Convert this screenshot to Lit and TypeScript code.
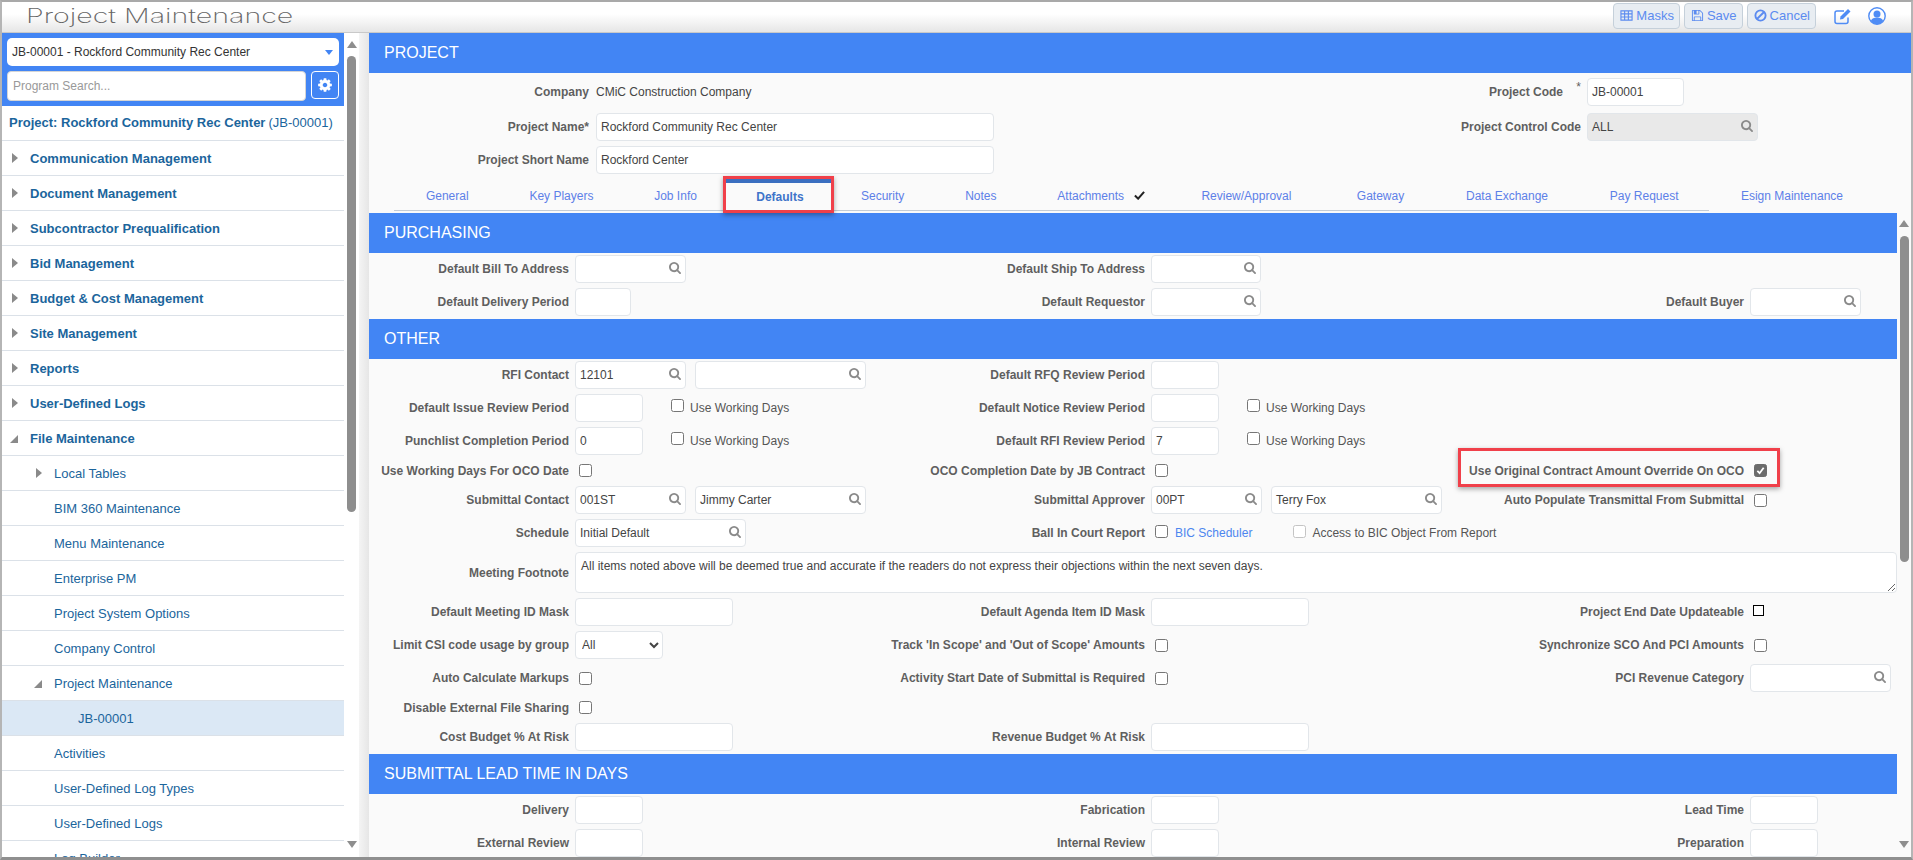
import { LitElement, html, css, nothing } from "lit";
import { customElement } from "lit/decorators.js";

const SEARCH = "M1152 704q0-185-131.500-316.500t-316.500-131.500-316.500 131.500-131.500 316.500 131.500 316.500 316.500 131.500 316.500-131.500 131.500-316.500zm512 832q0 52-38 90t-90 38q-54 0-90-38l-343-342q-179 124-399 124-143 0-273.500-55.500t-225-150-150-225-55.500-273.500 55.500-273.500 150-225 225-150 273.500-55.500 273.500 55.500 225 150 150 225 55.500 273.500q0 220-124 399l343 343q37 37 37 90z";
const COG = "M1152 896q0-106-75-181t-181-75-181 75-75 181 75 181 181 75 181-75 75-181zm512-109v222q0 12-8 23t-20 13l-185 28q-19 54-39 91 35 50 107 138 10 12 10 25t-9 23q-27 37-99 108t-94 71q-12 0-26-9l-138-108q-44 23-91 38-16 136-29 186-7 28-36 28h-222q-14 0-24.500-8.500t-11.500-21.500l-28-184q-49-16-90-37l-141 107q-10 9-25 9-14 0-25-11-126-114-165-168-7-10-7-23 0-12 8-23 15-21 51-66.500t54-70.500q-27-50-41-99l-183-27q-13-2-21-12.500t-8-23.500v-222q0-12 8-23t19-13l186-28q14-46 39-92-40-57-107-138-10-12-10-24 0-10 9-23 26-36 98.500-107.500t94.500-71.500q13 0 26 10l138 107q44-23 91-38 16-136 29-186 7-28 36-28h222q14 0 24.500 8.500t11.500 21.500l28 184q49 16 90 37l142-107q9-9 24-9 13 0 25 10 129 119 165 170 7 8 7 22 0 12-8 23-15 21-51 66.500t-54 70.500q26 50 41 98l183 28q13 2 21 12.500t8 23.500z";
const SAVE = "M512 1536h768v-384h-768v384zm896 0h128v-896q0-14-10-38.500t-20-34.500l-281-281q-10-10-34-20t-39-10v416q0 40-28 68t-68 28h-576q-40 0-68-28t-28-68v-416h-128v1280h128v-416q0-40 28-68t68-28h832q40 0 68 28t28 68v416zm-384-928v-320q0-13-9.500-22.500t-22.500-9.500h-192q-13 0-22.500 9.500t-9.500 22.500v320q0 13 9.500 22.500t22.500 9.500h192q13 0 22.500-9.500t9.500-22.500zm640 32v928q0 40-28 68t-68 28h-1344q-40 0-68-28t-28-68v-1344q0-40 28-68t68-28h928q40 0 88 20t76 48l280 280q28 28 48 76t20 88z";

const searchIcon = html`<svg class="si" viewBox="0 0 1664 1664"><path d=${SEARCH} fill="currentColor"></path></svg>`;

type Ctl =
  | { k: "in"; w: number; v?: string; s?: boolean; gap?: boolean }
  | { k: "cb"; checked?: boolean; black?: boolean }
  | { k: "wd" }
  | { k: "sel" }
  | { k: "ta" }
  | { k: "bic" };
type Row = { h?: number; cells: (null | [string, ...Ctl[]])[] };

const I = (w: number, v = "", s = false): Ctl => ({ k: "in", w, v, s });
const CB: Ctl = { k: "cb" };
const WD: Ctl = { k: "wd" };

const PURCHASING: Row[] = [
  { cells: [["Default Bill To Address", I(111, "", true)], ["Default Ship To Address", I(110, "", true)], null] },
  { cells: [["Default Delivery Period", I(56)], ["Default Requestor", I(110, "", true)], ["Default Buyer", I(111, "", true)]] },
];
const OTHER: Row[] = [
  { cells: [["RFI Contact", I(111, "12101", true), I(171, "", true)], ["Default RFQ Review Period", I(68)], null] },
  { cells: [["Default Issue Review Period", I(68), WD], ["Default Notice Review Period", I(68), WD], null] },
  { cells: [["Punchlist Completion Period", I(68, "0"), WD], ["Default RFI Review Period", I(68, "7"), WD], null] },
  { h: 21, cells: [["Use Working Days For OCO Date", CB], ["OCO Completion Date by JB Contract", CB], ["Use Original Contract Amount Override On OCO", { k: "cb", checked: true }]] },
  { cells: [["Submittal Contact", I(111, "001ST", true), I(171, "Jimmy Carter", true)], ["Submittal Approver", I(111, "00PT", true), I(171, "Terry Fox", true)], ["Auto Populate Transmittal From Submittal", CB]] },
  { cells: [["Schedule", I(171, "Initial Default", true)], ["Ball In Court Report", { k: "bic" }], null] },
];
const OTHER2: Row[] = [
  { cells: [["Default Meeting ID Mask", I(158)], ["Default Agenda Item ID Mask", I(158)], ["Project End Date Updateable", { k: "cb", black: true }]] },
  { cells: [["Limit CSI code usage by group", { k: "sel" }], ["Track 'In Scope' and 'Out of Scope' Amounts", CB], ["Synchronize SCO And PCI Amounts", CB]] },
  { cells: [["Auto Calculate Markups", CB], ["Activity Start Date of Submittal is Required", CB], ["PCI Revenue Category", I(141, "", true)]] },
  { h: 21, cells: [["Disable External File Sharing", CB], null, null] },
  { cells: [["Cost Budget % At Risk", I(158)], ["Revenue Budget % At Risk", I(158)], null] },
];
const LEAD: Row[] = [
  { cells: [["Delivery", I(68)], ["Fabrication", I(68)], ["Lead Time", I(68)]] },
  { cells: [["External Review", I(68)], ["Internal Review", I(68)], ["Preparation", I(68)]] },
];

const NAV: { t: string; lvl: number; arrow?: "r" | "d"; sel?: boolean }[] = [
  { t: "Communication Management", lvl: 0, arrow: "r" },
  { t: "Document Management", lvl: 0, arrow: "r" },
  { t: "Subcontractor Prequalification", lvl: 0, arrow: "r" },
  { t: "Bid Management", lvl: 0, arrow: "r" },
  { t: "Budget & Cost Management", lvl: 0, arrow: "r" },
  { t: "Site Management", lvl: 0, arrow: "r" },
  { t: "Reports", lvl: 0, arrow: "r" },
  { t: "User-Defined Logs", lvl: 0, arrow: "r" },
  { t: "File Maintenance", lvl: 0, arrow: "d" },
  { t: "Local Tables", lvl: 1, arrow: "r" },
  { t: "BIM 360 Maintenance", lvl: 1 },
  { t: "Menu Maintenance", lvl: 1 },
  { t: "Enterprise PM", lvl: 1 },
  { t: "Project System Options", lvl: 1 },
  { t: "Company Control", lvl: 1 },
  { t: "Project Maintenance", lvl: 1, arrow: "d" },
  { t: "JB-00001", lvl: 2, sel: true },
  { t: "Activities", lvl: 1 },
  { t: "User-Defined Log Types", lvl: 1 },
  { t: "User-Defined Logs", lvl: 1 },
  { t: "Log Builder", lvl: 1 },
];

const TABS = ["General", "Key Players", "Job Info", "Defaults", "Security", "Notes", "Attachments", "Review/Approval", "Gateway", "Data Exchange", "Pay Request"];
const TAB_CLASS: Record<string, string> = {
  "Attachments": "att",
  "Review/Approval": "rev",
  "Gateway": "wide",
  "Data Exchange": "wide",
};

@customElement("app-root")
export class AppRoot extends LitElement {
  static styles = css`
    :host { display: block; width: 1913px; height: 860px; overflow: hidden; background: #fff;
      font-family: "Liberation Sans", Arial, sans-serif; font-size: 12px; color: #444; }
    * { box-sizing: border-box; }
    .frame { width: 1913px; height: 860px; display: flex; flex-direction: column;
      border-top: 2px solid #a9a9a9; border-left: 2px solid #b5b5b5; border-right: 2px solid #b5b5b5; border-bottom: 3px solid #8f8f8f; overflow: hidden; }

    .top { height: 31px; flex: none; display: flex; align-items: center; background: linear-gradient(#ffffff 40%, #e6e6e6);
      border-bottom: 1px solid #c9c9c9; }
    .title { margin-left: 24px; font-family: Inter, "Liberation Sans", sans-serif; font-weight: 200; font-size: 20px; color: #666;
      transform: scaleX(1.43); transform-origin: left center; white-space: nowrap; flex: 1; margin-top: -3px; }
    .btn { height: 26px; margin-top: -3px; display: flex; align-items: center; gap: 3px; padding: 0 5px 0 6px; margin-right: 4px; font-size: 13px; color: #5b8bf0;
      background: #e8edf2; border: 1px solid #c5d0da; border-radius: 4px; white-space: nowrap; }
    .btn svg { width: 13px; height: 13px; flex: none; }
    .ticon { width: 18px; height: 18px; margin-top: -3px; flex: none; color: #4f8cf5; }
    .ticon.e { margin-left: 14px; }
    .ticon.u { margin-left: 16px; margin-right: 25px; }

    .body { flex: 1; display: flex; min-height: 0; }
    .side { width: 342px; flex: none; display: flex; flex-direction: column; overflow: hidden; background: #fff; }
    .sidehead { height: 73px; flex: none; background: #4285f4; padding: 5px 5px 0 5px; display: flex; flex-direction: column; gap: 5px; }
    .picker { height: 28px; background: #fff; border-radius: 5px; display: flex; align-items: center; padding: 0 6px 0 5px; color: #333; justify-content: space-between; white-space: nowrap; }
    .caret { width: 0; height: 0; border-left: 4px solid transparent; border-right: 4px solid transparent; border-top: 5px solid #4285f4; }
    .searchrow { display: flex; gap: 5px; }
    .psearch { width: 299px; height: 30px; background: #fff; border: 1px solid #d5d5d5; border-radius: 4px; display: flex; align-items: center; padding-left: 5px; color: #999; }
    .gear { width: 28px; height: 28px; border: 1px solid #fff; border-radius: 4px; display: flex; align-items: center; justify-content: center; color: #fff; }
    .gear svg { width: 16px; height: 16px; }
    .ptitle { height: 35px; flex: none; padding: 0 0 2px 7px; display: flex; align-items: center; gap: 3px; border-bottom: 1px solid #dbe1e8; font-size: 13px; font-weight: bold; color: #1b659c; white-space: nowrap; }
    .ptitle span { font-weight: normal; }
    .nrow { height: 35px; flex: none; display: flex; align-items: center; border-bottom: 1px solid #dbe1e8; color: #1b659c; font-size: 13px; white-space: nowrap; position: relative; }
    .nrow.l0 { font-weight: bold; padding-left: 28px; }
    .nrow.l1 { padding-left: 52px; }
    .nrow.l2 { padding-left: 76px; }
    .nrow.sel { background: #dbe8f5; }
    .tri { position: absolute; width: 0; height: 0; }
    .tri.r { border-top: 5px solid transparent; border-bottom: 5px solid transparent; border-left: 6px solid #8a8a8a; top: 12px; }
    .tri.d { border-bottom: 8px solid #8a8a8a; border-left: 8px solid transparent; top: 14px; }
    .l0 .tri.r { left: 10px; } .l0 .tri.d { left: 8px; }
    .l1 .tri.r { left: 34px; } .l1 .tri.d { left: 32px; }

    .sbar { flex: none; width: 14px; position: relative; }
    .sbar .thumb { position: absolute; left: 3px; width: 9px; background: #8e8e8e; border-radius: 5px; }
    .sbar .up, .sbar .dn { position: absolute; left: 2px; width: 0; height: 0; border-left: 5px solid transparent; border-right: 5px solid transparent; }
    .sbar .up { border-bottom: 7px solid #8e8e8e; }
    .sbar .dn { border-top: 7px solid #8e8e8e; }
    .sideb { width: 15px; background: #fff; margin-right: 0; }
    .sideb .thumb { top: 23px; height: 456px; left: 3px; }
    .sideb .up { top: 8px; left: 3px; }
    .sideb .dn { top: 808px; left: 3px; }
    .sep { width: 10px; flex: none; background: linear-gradient(90deg, #f4f4f4, #e6e6e6); }

    .main { flex: 1; min-width: 0; background: #fafafa; display: flex; flex-direction: column; overflow: hidden; }
    .bar { height: 40px; flex: none; background: #4285f4; color: #fff; font-size: 16px; display: flex; align-items: center; padding-left: 15px; white-space: nowrap; }

    .proj { flex: none; height: 101px; display: grid; grid-template-columns: 227px 398px 593px 1fr; grid-template-rows: 28px 30px 28px; row-gap: 5px; padding: 5px 0 0; }
    .mid { margin-top: 2px; }
    .plabel { text-align: right; font-weight: bold; color: #5f5f5f; align-self: center; padding-right: 7px; white-space: nowrap; }
    .plabel.r2 { padding-right: 6px; position: relative; }
    .plabel.code { padding-right: 24px; position: relative; }
    .star { position: absolute; right: 6px; top: -5px; font-weight: normal; }
    .val { display: flex; align-items: center; padding-left: 0; white-space: nowrap; color: #444; }

    .tabstrip { display: flex; height: 39px; position: relative; padding-left: 25px; }
    .tabline { display: flex; border-bottom: 1px solid #c4ccd6; height: 32px; margin-top: 5px; padding-left: 1.5px; }
    .tab { padding: 10px 30.4px 0; color: #5d80e8; white-space: nowrap; height: 32px; position: relative; }
    .tab.active { font-weight: bold; color: #3f74c9; border-top: 4px solid #3b6fc0; padding: 7px 27px 0 30px; margin-left: -1px; background: #fafafa; height: 33px; }
    .tab.att { padding-right: 26px; }
    .tab.rev { padding-right: 35px; }
    .tab.wide { padding-right: 31.4px; }
    .tab .ck { display: inline-block; width: 11px; height: 10px; margin-left: 10px; color: #222; }
    .tab.last { margin-top: 5px; padding-left: 32px; }
    .redtab { position: absolute; left: -3px; right: -3px; top: -7px; bottom: -1px; border: 3px solid #f0404a; box-shadow: 0 2px 5px rgba(0,0,0,.35); pointer-events: none; }

    .wrap { flex: 1; min-height: 0; display: flex; }
    .content { width: 1528px; flex: none; overflow: hidden; }
    .form { display: grid; grid-template-columns: 206px 295px 281px 309px 290px 147px; row-gap: 5px; padding: 2px 0 3px; }
    .lab { text-align: right; font-weight: bold; color: #5f5f5f; padding-right: 6px; white-space: nowrap; display: flex; align-items: center; justify-content: flex-end; }
    .ctl { display: flex; align-items: center; gap: 9px; min-width: 0; white-space: nowrap; }
    .inp { height: 28px; flex: none; background: #fff; border: 1px solid #e2e6ea; border-radius: 4px; display: flex; align-items: center; justify-content: space-between; padding: 0 4px; color: #444; white-space: nowrap; }
    .inp.grey { background: #e9e9e9; }
    .si { width: 12px; height: 12px; color: #8a8a8a; flex: none; margin-top: -2px; }
    .cb { width: 13px; height: 13px; flex: none; margin-left: 4px; border: 1px solid #767676; border-radius: 2.5px; background: #fff; display: flex; align-items: center; justify-content: center; }
    .cb.on { background: #6b6b6b; border-color: #6b6b6b; color: #fff; }
    .cb.on svg { width: 9px; height: 9px; }
    .cb.blk { border-color: #000; border-radius: 0; width: 11px; height: 11px; margin-left: 3px; margin-top: -3px; }
    .cb.off { border-color: #c4c4c4; }
    .wd { display: flex; align-items: center; margin-left: 19px; }
    .wd .cb { margin-left: 0; margin-top: -5px; }
    .wd span { margin-left: 6px; color: #555; }
    .bic { display: flex; align-items: center; }
    .bic a { color: #4d86ef; margin-left: 7px; }
    .bic .cb.off { margin-left: 41px; margin-top: -3px; }
    .bic > .cb:first-child { margin-top: -3px; }
    .bic span { margin-left: 6px; color: #555; }
    select { width: 88px; height: 28px; font: 12px "Liberation Sans", Arial, sans-serif; color: #444; background: #fff; border: 1px solid #e2e6ea; border-radius: 4px; padding-left: 2px; }
    .noterow { grid-column: 2 / -1; }
    textarea { display: block; width: 1322px; height: 41px; font: 12px "Liberation Sans", Arial, sans-serif; color: #444; background: #fff; border: 1px solid #e2e6ea; border-radius: 4px; padding: 6px 5px; outline: none; }
    .hl { position: relative; }
    .redbox { position: absolute; left: -2px; right: -30px; top: -12px; bottom: -6px; border: 3px solid #f0404a; box-shadow: 0 2px 5px rgba(0,0,0,.35); pointer-events: none; }
    .rsb { flex: none; width: 14px; background: #fafafa; position: relative; }
    .rsb .thumb { top: 23px; height: 326px; left: 3px; }
    .rsb .up { top: 7px; left: 2px; }
    .rsb .dn { top: 628px; left: 2px; }
  `;

  ctl(c: Ctl) {
    switch (c.k) {
      case "in":
        return html`<div class="inp" style="width:${c.w}px"><span>${c.v}</span>${c.s ? searchIcon : nothing}</div>`;
      case "cb":
        return html`<div class="cb ${c.checked ? "on" : ""} ${c.black ? "blk" : ""}">${c.checked
          ? html`<svg viewBox="0 0 10 10"><path d="M1.5 5.5 L4 8 L8.5 2" fill="none" stroke="currentColor" stroke-width="2"></path></svg>`
          : nothing}</div>`;
      case "wd":
        return html`<div class="wd"><div class="cb"></div><span>Use Working Days</span></div>`;
      case "sel":
        return html`<select><option>All</option></select>`;
      case "ta":
        return html`<textarea readonly .value=${"All items noted above will be deemed true and accurate if the readers do not express their objections within the next seven days."}></textarea>`;
      case "bic":
        return html`<div class="bic"><div class="cb"></div><a>BIC Scheduler</a><div class="cb off"></div><span>Access to BIC Object From Report</span></div>`;
    }
  }

  rows(rows: Row[]) {
    return rows.map((r) =>
      r.cells.map((c) => {
        const h = r.h ? `height:${r.h}px` : "";
        if (!c) return html`<div style=${h}></div><div style=${h}></div>`;
        const [label, ...ctls] = c;
        const hi = label.startsWith("Use Original");
        return html`<div class="lab ${hi ? "hl" : ""}" style=${h}>${label}${hi ? html`<div class="redbox"></div>` : nothing}</div><div class="ctl" style=${h}>${ctls.map((x) => this.ctl(x))}</div>`;
      })
    );
  }

  render() {
    return html`<div class="frame">
      <div class="top">
        <div class="title">Project Maintenance</div>
        <div class="btn"><svg viewBox="0 0 14 14"><path d="M1 2h12v10H1zM1 5.300h12M1 8.600h12M5 2v10M9 2v10" fill="none" stroke="currentColor" stroke-width="1.200"></path></svg>Masks</div>
        <div class="btn"><svg viewBox="0 0 1792 1792"><path d=${SAVE} fill="currentColor"></path></svg>Save</div>
        <div class="btn"><svg viewBox="0 0 14 14"><circle cx="7" cy="7" r="5.500" fill="none" stroke="currentColor" stroke-width="2"></circle><path d="M3.200 10.800L10.800 3.200" stroke="currentColor" stroke-width="2"></path></svg>Cancel</div>
        <svg class="ticon e" viewBox="0 0 18 18"><path d="M14 10.500V14.500a2 2 0 0 1-2 2H3a2 2 0 0 1-2-2V6a2 2 0 0 1 2-2h7" fill="none" stroke="currentColor" stroke-width="1.500"></path><path d="M6.500 9.500 14 2l2.500 2.500L9 12l-3 .6z" fill="currentColor"></path></svg>
        <svg class="ticon u" viewBox="0 0 18 18"><circle cx="9" cy="9" r="8.200" fill="none" stroke="currentColor" stroke-width="1.400"></circle><circle cx="9" cy="7" r="3.500" fill="currentColor"></circle><path d="M2.800 14c1-2.600 3.400-3.500 6.200-3.500s5.200.9 6.200 3.500A8 8 0 0 1 9 17.200 8 8 0 0 1 2.800 14z" fill="currentColor"></path></svg>
      </div>
      <div class="body">
        <div class="side">
          <div class="sidehead">
            <div class="picker"><span>JB-00001 - Rockford Community Rec Center</span><div class="caret"></div></div>
            <div class="searchrow">
              <div class="psearch">Program Search...</div>
              <div class="gear"><svg viewBox="0 0 1792 1792"><path d=${COG} fill="currentColor"></path></svg></div>
            </div>
          </div>
          <div class="ptitle">Project: Rockford Community Rec Center <span>(JB-00001)</span></div>
          ${NAV.map((n) => html`<div class="nrow l${n.lvl} ${n.sel ? "sel" : ""}">${n.arrow ? html`<i class="tri ${n.arrow}"></i>` : nothing}${n.t}</div>`)}
        </div>
        <div class="sbar sideb"><div class="up"></div><div class="thumb"></div><div class="dn"></div></div>
        <div class="sep"></div>
        <div class="main">
          <div class="bar">PROJECT</div>
          <div class="proj">
            <div class="plabel">Company</div><div class="val">CMiC Construction Company</div>
            <div class="plabel code">Project Code<span class="star">*</span></div><div class="ctl">${this.ctl(I(97, "JB-00001"))}</div>
            <div class="plabel mid">Project Name*</div><div class="ctl mid">${this.ctl(I(398, "Rockford Community Rec Center"))}</div>
            <div class="plabel r2 mid">Project Control Code</div><div class="ctl mid"><div class="inp grey" style="width:171px"><span>ALL</span>${searchIcon}</div></div>
            <div class="plabel">Project Short Name</div><div class="ctl">${this.ctl(I(398, "Rockford Center"))}</div>
            <div></div><div></div>
          </div>
          <div class="tabstrip">
            <div class="tabline">
              ${TABS.map((t) =>
                t === "Defaults"
                  ? html`<div class="tab active">${t}<div class="redtab"></div></div>`
                  : t === "Attachments"
                  ? html`<div class="tab att">${t}<svg class="ck" viewBox="0 0 12 10"><path d="M1 5.500 4.500 9 11 1.500" fill="none" stroke="currentColor" stroke-width="2.200"></path></svg></div>`
                  : html`<div class="tab ${TAB_CLASS[t] ?? ""}">${t}</div>`
              )}
            </div>
            <div class="tab last">Esign Maintenance</div>
          </div>
          <div class="wrap">
            <div class="content">
              <div class="bar">PURCHASING</div>
              <div class="form">${this.rows(PURCHASING)}</div>
              <div class="bar">OTHER</div>
              <div class="form">
                ${this.rows(OTHER)}
                <div class="lab">Meeting Footnote</div><div class="ctl noterow">${this.ctl({ k: "ta" })}</div>
                ${this.rows(OTHER2)}
              </div>
              <div class="bar">SUBMITTAL LEAD TIME IN DAYS</div>
              <div class="form">${this.rows(LEAD)}</div>
            </div>
            <div class="sbar rsb"><div class="up"></div><div class="thumb"></div><div class="dn"></div></div>
          </div>
        </div>
      </div>
    </div>`;
  }
}
